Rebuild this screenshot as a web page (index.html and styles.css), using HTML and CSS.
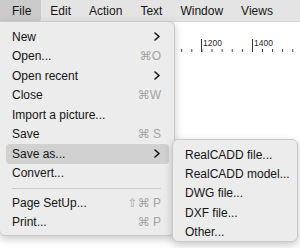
FILE: index.html
```html
<!DOCTYPE html>
<html>
<head>
<meta charset="utf-8">
<link rel="stylesheet" href="styles.css">
</head>
<body>
<div class="screen">
  <div class="menubar">
    <span class="mb-item active">File</span>
    <span class="mb-item">Edit</span>
    <span class="mb-item">Action</span>
    <span class="mb-item">Text</span>
    <span class="mb-item">Window</span>
    <span class="mb-item">Views</span>
  </div>
  <div class="workspace">
    <div class="ruler">
      <span class="major" style="left:201px">1200</span>
      <span class="major" style="left:252px">1400</span>
    </div>

    <div class="menu main-menu">
      <div class="item"><span>New</span><svg class="chev" viewBox="0 0 6 9" width="6" height="9"><path d="M1 1 L5 4.5 L1 8"/></svg></div>
      <div class="item"><span>Open...</span><span class="key">⌘O</span></div>
      <div class="item"><span>Open recent</span><svg class="chev" viewBox="0 0 6 9" width="6" height="9"><path d="M1 1 L5 4.5 L1 8"/></svg></div>
      <div class="item"><span>Close</span><span class="key">⌘W</span></div>
      <div class="item"><span>Import a picture...</span></div>
      <div class="item"><span>Save</span><span class="key">⌘ S</span></div>
      <div class="item selected"><span>Save as...</span><svg class="chev" viewBox="0 0 6 9" width="6" height="9"><path d="M1 1 L5 4.5 L1 8"/></svg></div>
      <div class="item"><span>Convert...</span></div>
      <div class="sep"></div>
      <div class="item"><span>Page SetUp...</span><span class="key">⇧⌘ P</span></div>
      <div class="item"><span>Print...</span><span class="key">⌘ P</span></div>
    </div>

    <div class="menu sub-menu">
      <div class="item"><span>RealCADD file...</span></div>
      <div class="item"><span>RealCADD model...</span></div>
      <div class="item"><span>DWG file...</span></div>
      <div class="item"><span>DXF file...</span></div>
      <div class="item"><span>Other...</span></div>
    </div>
  </div>
</div>
</body>
</html>
```

FILE: styles.css
```css
* { box-sizing: border-box; }
html, body {
  margin: 0;
  padding: 0;
  width: 300px;
  height: 248px;
  overflow: hidden;
  background: #ffffff;
}
.screen {
  display: flex;
  flex-direction: column;
  width: 300px;
  height: 248px;
  font-family: "Liberation Sans", Arial, sans-serif;
  font-size: 12px;
  color: #141414;
}
.menubar {
  display: flex;
  align-items: stretch;
  height: 22px;
  background: #e4e4e4;
  border-bottom: 1px solid #d6d6d6;
}
.mb-item {
  display: flex;
  align-items: center;
  padding: 0 9px;
}
.mb-item:first-child {
  padding: 0 10px 0 12px;
}
.mb-item.active {
  background: #cbcbcb;
  border-radius: 0 0 3px 0;
}
.workspace {
  position: relative;
  flex: 1;
  background: #ffffff;
}
.ruler {
  position: relative;
  height: 30px;
  background-color: #ffffff;
  background-image: linear-gradient(to right, #3a3a3a 0 1px, transparent 1px);
  background-size: 10.1px 3px;
  background-repeat: repeat-x;
  background-position: 9.7px 100%;
}
.major {
  position: absolute;
  top: 17px;
  height: 13px;
  border-left: 1px solid #3a3a3a;
  padding-left: 1px;
  font-size: 8.5px;
  line-height: 8px;
  color: #2a2a2a;
}
.menu {
  position: absolute;
  background: #ececec;
  border: 1px solid #c9c9c9;
  box-shadow: 0 3px 9px rgba(0, 0, 0, 0.22);
  display: flex;
  flex-direction: column;
}
.main-menu {
  left: -1px;
  top: -1px;
  width: 176px;
  padding: 5px 5px 3px 6px;
  border-radius: 0 6px 6px 6px;
}
.sub-menu {
  left: 172px;
  top: 117px;
  width: 126px;
  padding: 5px 5px 0 5px;
  border-radius: 6px;
}
.item {
  display: flex;
  align-items: center;
  justify-content: space-between;
  height: 19.5px;
  padding: 0 8px 0 6px;
  border-radius: 4px;
  white-space: nowrap;
}
.sub-menu .item {
  padding-left: 7px;
  height: 19.3px;
}
.item.selected {
  background: #d1d1d1;
}
.key {
  color: #a3a3a3;
  font-family: "Liberation Sans", "DejaVu Sans", sans-serif;
}
.chev {
  fill: none;
  stroke: #141414;
  stroke-width: 1.6;
  stroke-linecap: round;
  stroke-linejoin: round;
  margin-right: 1px;
}
.sep {
  height: 10px;
  margin: 0 8px 0 6px;
  display: flex;
  align-items: center;
}
.sep::before {
  content: "";
  flex: 1;
  height: 1px;
  background: #cdcdcd;
}
```
